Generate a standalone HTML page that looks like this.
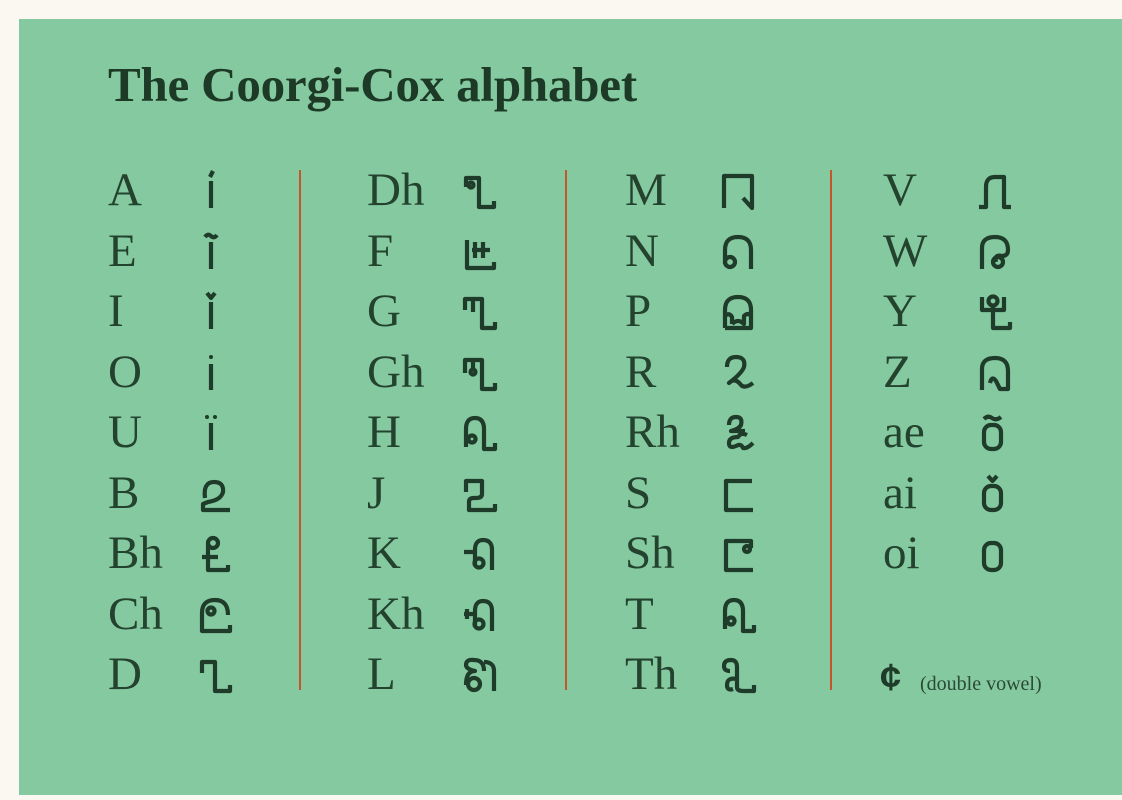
<!DOCTYPE html>
<html><head><meta charset="utf-8"><style>
html,body{margin:0;padding:0}
body{width:1122px;height:800px;background:#fbf8f2;position:relative;overflow:hidden}
.card{position:absolute;left:19px;top:19px;width:1103px;height:776px;background:#85c9a0}
.t{position:absolute;font-family:"Liberation Serif",serif;color:#24432f;white-space:nowrap}
.title{font-weight:bold;font-size:49px;line-height:1;color:#1c3a26;left:108px;top:60px;letter-spacing:-0.2px}
.l{font-size:47px;line-height:1}
.r{position:absolute;width:2px;background:#c5562c;top:170px;height:520px}
svg{position:absolute;overflow:visible}
svg path,svg line,svg circle,svg rect{fill:none;stroke:#1f3b29;stroke-width:4.2;stroke-linecap:butt;stroke-linejoin:round}
</style></head><body>
<div class="card"></div>
<div class="t title">The Coorgi-Cox alphabet</div>
<div class="r" style="left:299px"></div>
<div class="r" style="left:565px"></div>
<div class="r" style="left:830px"></div>

<div class="t l" style="left:108px;top:167px">A</div>
<div class="t l" style="left:108px;top:228px">E</div>
<div class="t l" style="left:108px;top:288px">I</div>
<div class="t l" style="left:108px;top:349px">O</div>
<div class="t l" style="left:108px;top:409px">U</div>
<div class="t l" style="left:108px;top:470px">B</div>
<div class="t l" style="left:108px;top:530px">Bh</div>
<div class="t l" style="left:108px;top:591px">Ch</div>
<div class="t l" style="left:108px;top:651px">D</div>

<div class="t l" style="left:367px;top:167px">Dh</div>
<div class="t l" style="left:367px;top:228px">F</div>
<div class="t l" style="left:367px;top:288px">G</div>
<div class="t l" style="left:367px;top:349px">Gh</div>
<div class="t l" style="left:367px;top:409px">H</div>
<div class="t l" style="left:367px;top:470px">J</div>
<div class="t l" style="left:367px;top:530px">K</div>
<div class="t l" style="left:367px;top:591px">Kh</div>
<div class="t l" style="left:367px;top:651px">L</div>

<div class="t l" style="left:625px;top:167px">M</div>
<div class="t l" style="left:625px;top:228px">N</div>
<div class="t l" style="left:625px;top:288px">P</div>
<div class="t l" style="left:625px;top:349px">R</div>
<div class="t l" style="left:625px;top:409px">Rh</div>
<div class="t l" style="left:625px;top:470px">S</div>
<div class="t l" style="left:625px;top:530px">Sh</div>
<div class="t l" style="left:625px;top:591px">T</div>
<div class="t l" style="left:625px;top:651px">Th</div>

<div class="t l" style="left:883px;top:167px">V</div>
<div class="t l" style="left:883px;top:228px">W</div>
<div class="t l" style="left:883px;top:288px">Y</div>
<div class="t l" style="left:883px;top:349px">Z</div>
<div class="t l" style="left:883px;top:409px">ae</div>
<div class="t l" style="left:883px;top:470px">ai</div>
<div class="t l" style="left:883px;top:530px">oi</div>
<div class="t" style="left:880px;top:659px;font-family:'Liberation Sans',sans-serif;font-weight:bold;font-size:38px;line-height:1;color:#1f3b29">¢</div>
<div class="t" style="left:920px;top:674px;font-size:20px;line-height:1;color:#2a4a36">(double vowel)</div>

<svg style="left:198px;top:173px" width="36" height="36"><line x1="13" y1="8" x2="13" y2="35"/><line x1="12" y1="4" x2="15" y2="-2" stroke-width="2.8"/></svg>
<svg style="left:198px;top:234px" width="36" height="36"><line x1="13" y1="8" x2="13" y2="35"/><path d="M7,3 Q10,-1 13,2 T19,1" stroke-width="2.8"/></svg>
<svg style="left:198px;top:294px" width="36" height="36"><line x1="13" y1="8" x2="13" y2="35"/><path d="M9,-1 L13,4 L17,-1" stroke-width="2.8"/></svg>
<svg style="left:198px;top:355px" width="36" height="36"><line x1="13" y1="9" x2="13" y2="35"/><circle cx="13" cy="2" r="2" style="fill:#1f3b29;stroke:none"/></svg>
<svg style="left:198px;top:415px" width="36" height="36"><line x1="13" y1="8" x2="13" y2="35"/><circle cx="9" cy="2" r="2" style="fill:#1f3b29;stroke:none"/><circle cx="17" cy="2" r="2" style="fill:#1f3b29;stroke:none"/></svg>
<svg style="left:198px;top:476px" width="36" height="36"><path d="M7,22 Q5,6 16,6 Q26,6 25,16 Q23,24 10,26 L5,28 L5,34 L32,34"/></svg>
<svg style="left:198px;top:536px" width="36" height="36"><circle cx="15" cy="7" r="5"/><path d="M10,8 L10,34 L30,34 L30,29 M4,21 L20,21"/></svg>
<svg style="left:198px;top:597px" width="36" height="36"><path d="M30,18 Q30,3 17,3 Q4,3 4,16 L4,34 L32,34 L32,28"/><circle cx="13" cy="14" r="3.5"/></svg>
<svg style="left:198px;top:657px" width="36" height="36"><path d="M4,16 L4,5 L17,5 L17,34 L32,34 L32,28"/></svg>

<svg style="left:462px;top:173px" width="36" height="36"><path d="M4,14 L4,5 L17,5 L17,34 L32,34 L32,28"/><circle cx="9" cy="12" r="2.5"/></svg>
<svg style="left:462px;top:234px" width="36" height="36"><path d="M5,6 L5,34 L32,34 L32,28 M13,8 L13,24 M21,8 L21,24 M10,16 L28,16"/></svg>
<svg style="left:462px;top:294px" width="36" height="36"><path d="M3,16 L3,5 L20,5 L20,34 L33,34 L33,28 M11,5 L11,18"/></svg>
<svg style="left:462px;top:355px" width="36" height="36"><path d="M3,18 L3,5 L20,5 L20,34 L33,34 L33,28 M11,5 L11,15"/><circle cx="11" cy="17" r="2.5"/></svg>
<svg style="left:462px;top:415px" width="36" height="36"><path d="M4,32 L4,14 Q4,3 13,3 Q22,3 22,14 L22,34 L33,34 L33,28"/><circle cx="10" cy="24" r="3.5"/></svg>
<svg style="left:462px;top:476px" width="36" height="36"><path d="M4,16 L4,5 L20,5 L20,18 Q20,22 14,22 L12,22 Q7,22 7,26 L7,34 L33,34 L33,28"/></svg>
<svg style="left:462px;top:536px" width="36" height="36"><path d="M2,16 L14,16 M13,30 L13,14 Q13,4 21,4 Q30,4 30,14 L30,34"/><circle cx="17" cy="27" r="4.5"/></svg>
<svg style="left:462px;top:597px" width="36" height="36"><path d="M5,12 L5,22 M2,17 L14,17 M13,30 L13,14 Q13,4 21,4 Q30,4 30,14 L30,34"/><circle cx="17" cy="27" r="4.5"/></svg>
<svg style="left:462px;top:657px" width="36" height="36"><path d="M4,28 Q4,14 13,14 Q4,12 4,8 Q4,2 12,3 Q22,3 22,14 M22,5 Q32,5 32,14 L32,34"/><circle cx="12" cy="27" r="6"/></svg>

<svg style="left:721px;top:173px" width="36" height="36"><path d="M3,35 L3,3 L31,3 L31,35 L22,25"/></svg>
<svg style="left:721px;top:234px" width="36" height="36"><path d="M4,30 L4,16 Q4,3 17,3 Q30,3 30,16 L30,35"/><circle cx="9" cy="28" r="5"/></svg>
<svg style="left:721px;top:294px" width="36" height="36"><path d="M4,34 L4,16 Q4,3 17,3 Q30,3 30,16 L30,34 L4,34 M4,22 Q8,18 11,23 L11,30 M11,30 Q17,24 23,30 L23,22 Q27,18 30,22"/></svg>
<svg style="left:721px;top:355px" width="36" height="36"><path d="M6,12 Q6,2 15,2 Q25,2 23,12 Q21,18 8,28 Q14,22 20,30 Q24,34 32,28"/></svg>
<svg style="left:721px;top:415px" width="36" height="36"><path d="M8,10 Q8,2 15,2 Q22,2 20,10 Q18,14 10,16 L24,16 M26,20 Q20,17 17,22 Q8,22 8,28 Q8,34 15,31 Q20,28 22,33 Q26,34 32,28"/></svg>
<svg style="left:721px;top:476px" width="36" height="36"><path d="M31,5 L5,5 L5,34 L32,34"/></svg>
<svg style="left:721px;top:536px" width="36" height="36"><path d="M30,12 L30,5 L5,5 L5,34 L32,34"/><circle cx="26" cy="13" r="3"/></svg>
<svg style="left:721px;top:597px" width="36" height="36"><path d="M4,32 L4,14 Q4,3 13,3 Q22,3 22,14 L22,34 L33,34 L33,28"/><circle cx="10" cy="24" r="3.5"/></svg>
<svg style="left:721px;top:657px" width="36" height="36"><path d="M9,14 Q3,14 3,9 Q3,3 10,3 Q16,3 16,10 L16,30 Q16,34 22,34 L33,34 L33,28 M16,22 Q6,20 6,28 Q6,34 12,32"/></svg>

<svg style="left:978px;top:173px" width="36" height="36"><path d="M1,34 L8,34 L8,14 Q8,4 17,4 L26,4 L26,34 L33,34"/></svg>
<svg style="left:978px;top:234px" width="36" height="36"><path d="M4,35 L4,14 Q4,3 17,3 Q30,3 30,16 Q30,22 24,22 Q16,20 18,28"/><circle cx="20" cy="28" r="5"/></svg>
<svg style="left:978px;top:294px" width="36" height="36"><circle cx="15" cy="7" r="4.5"/><path d="M4,3 L4,16 L26,16 L26,3 M15,12 L15,34 L32,34 L32,28"/></svg>
<svg style="left:978px;top:355px" width="36" height="36"><path d="M4,35 L4,14 Q4,3 17,3 Q30,3 30,16 L30,34 L22,34 L18,26 Q14,20 12,28"/></svg>
<svg style="left:978px;top:415px" width="36" height="36"><rect x="6" y="10" width="17" height="24" rx="7"/><path d="M6,4 Q10,0 14,3 T23,2" stroke-width="2.8"/></svg>
<svg style="left:978px;top:476px" width="36" height="36"><rect x="6" y="10" width="17" height="24" rx="7"/><path d="M10,0 L14.5,5 L19,0" stroke-width="2.8"/></svg>
<svg style="left:978px;top:536px" width="36" height="36"><rect x="6" y="7" width="17" height="27" rx="7"/></svg>
</body></html>
